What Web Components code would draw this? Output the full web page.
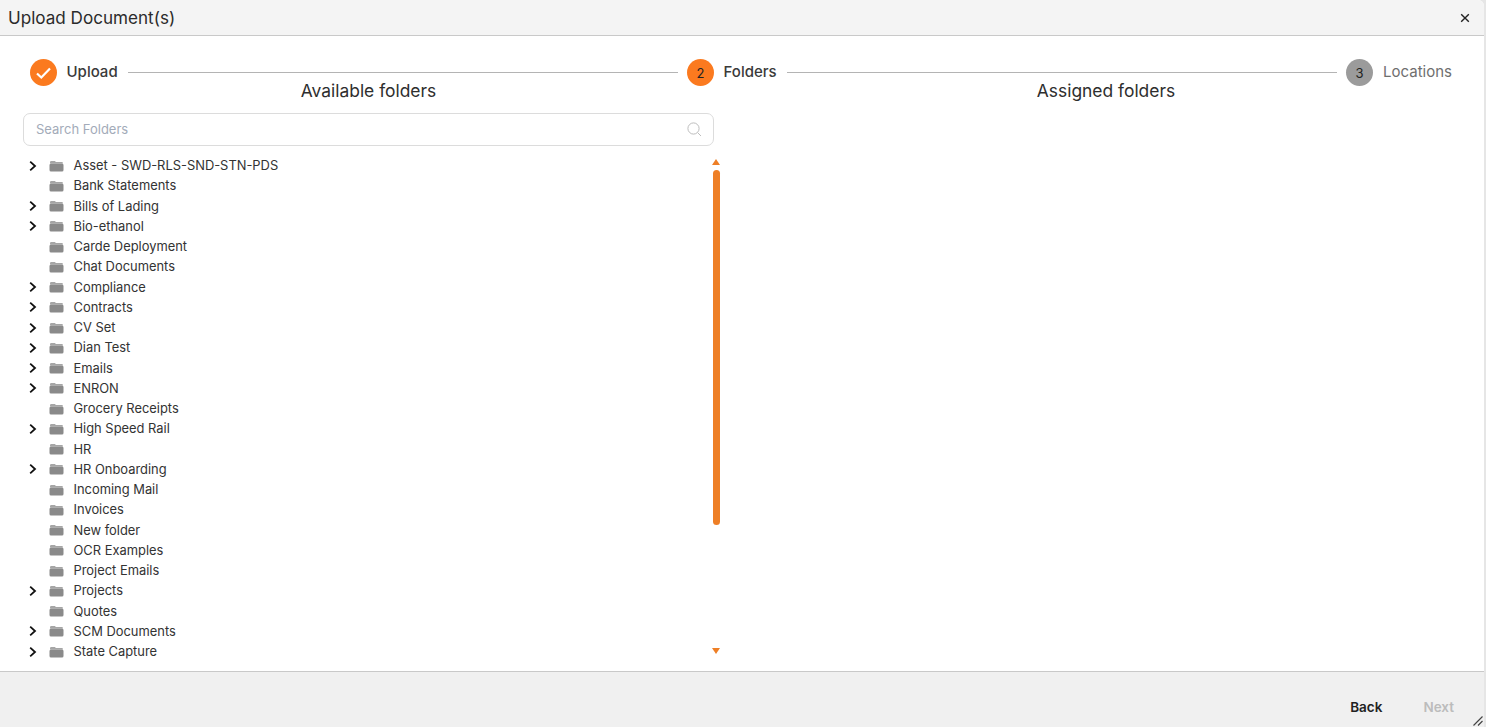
<!DOCTYPE html>
<html><head><meta charset="utf-8"><style>
html,body{margin:0;height:100%;overflow:hidden;background:#e6e6e6}
body{font-family:Inter,"Liberation Sans",sans-serif}
</style></head><body>
<upload-dialog></upload-dialog>
<script>
const chev='<svg width="10" height="12" viewBox="0 0 10 12"><path d="M2.200 1.700 7 6l-4.800 4.300" fill="none" stroke="#111" stroke-width="1.800"/></svg>';
const folder='<svg width="15" height="12" viewBox="0 0 15 12"><path d="M1 3.500V2.200a1.200 1.200 0 0 1 1.200-1.200h3.600l1.200 1h5.800a1.200 1.200 0 0 1 1.200 1.500z" fill="#a6a6a6"/><rect x="0.500" y="3.600" width="14" height="8" rx="1.500" fill="#8a8a8a"/></svg>';

class StepItem extends HTMLElement{
  connectedCallback(){
    const st=this.getAttribute('state');
    const num=this.getAttribute('num');
    const bg=st==='todo'?'#9b9b9b':'#fb7a1f';
    const inner=st==='done'
      ?'<svg width="17" height="14" viewBox="0 0 17 14"><path d="M2 7.500 6.300 11.500 15 2.500" fill="none" stroke="#fff" stroke-width="2.200"/></svg>'
      :`<span>${num}</span>`;
    const col=st==='todo'?'#6f6f6f':'#3a3a3a';
    this.attachShadow({mode:'open'}).innerHTML=`<style>
      :host{display:flex;align-items:center;gap:${st==='todo'?10:9.500}px}
      .c{width:27px;height:27px;border-radius:50%;background:${bg};display:flex;align-items:center;justify-content:center;font-size:13px;color:#222;flex:none}
      .l{font-size:15px;font-weight:${st==='todo'?400:500};color:${col};line-height:26px;height:27px;white-space:nowrap}
    </style><div class="c">${inner}</div><div class="l"><slot></slot></div>`;
  }
}
customElements.define('step-item',StepItem);

class StepLine extends HTMLElement{
  connectedCallback(){
    this.attachShadow({mode:'open'}).innerHTML=`<style>:host{display:block;flex:1;height:1px;background:#b4b4b4;margin:0 9px 0 10px}</style>`;
  }
}
customElements.define('step-line',StepLine);

class StepBar extends HTMLElement{
  connectedCallback(){
    this.attachShadow({mode:'open'}).innerHTML=`<style>:host{display:flex;align-items:center;height:27px;padding:23px 32px 0 30px}</style><slot></slot>`;
  }
}
customElements.define('step-bar',StepBar);

class SearchBox extends HTMLElement{
  connectedCallback(){
    this.attachShadow({mode:'open'}).innerHTML=`<style>
      :host{display:flex;align-items:center;justify-content:space-between;box-sizing:border-box;height:33px;border:1px solid #dcdcdc;border-radius:7px;padding:0 11px 0 12px;background:#fff}
      span{font-size:13px;color:#a3abb9;margin-bottom:1px}
      svg{display:block}
    </style><span><slot></slot></span><svg width="15" height="15" viewBox="0 0 15 15"><circle cx="6.500" cy="6.500" r="5.600" fill="none" stroke="#bdbdbd" stroke-width="1"/><path d="M10.700 10.700 14 14" stroke="#bdbdbd" stroke-width="1"/></svg>`;
  }
}
customElements.define('search-box',SearchBox);

class TreeRow extends HTMLElement{
  connectedCallback(){
    const kids=this.hasAttribute('kids');
    this.attachShadow({mode:'open'}).innerHTML=`<style>
      :host{display:flex;align-items:center;height:20.250px;flex:none;white-space:nowrap;font-size:12.900px;color:#333}
      .a{width:26px;flex:none;display:flex;justify-content:flex-start;padding-left:5px;box-sizing:border-box}
      .f{width:24.500px;flex:none;display:flex}
      svg{display:block}
    </style><div class="a">${kids?chev:''}</div><div class="f">${folder}</div><slot></slot>`;
  }
}
customElements.define('tree-row',TreeRow);

class FolderTree extends HTMLElement{
  connectedCallback(){
    const rows=[["Asset - SWD-RLS-SND-STN-PDS",1],["Bank Statements",0],["Bills of Lading",1],["Bio-ethanol",1],["Carde Deployment",0],["Chat Documents",0],["Compliance",1],["Contracts",1],["CV Set",1],["Dian Test",1],["Emails",1],["ENRON",1],["Grocery Receipts",0],["High Speed Rail",1],["HR",0],["HR Onboarding",1],["Incoming Mail",0],["Invoices",0],["New folder",0],["OCR Examples",0],["Project Emails",0],["Projects",1],["Quotes",0],["SCM Documents",1],["State Capture",1]];
    this.attachShadow({mode:'open'}).innerHTML=`<style>
      :host{display:flex;height:507px;margin-top:9px}
      .list{flex:1;overflow:hidden;display:flex;flex-direction:column;box-sizing:border-box;padding-top:.4px}
      .bar{width:10px;flex:none;margin-left:-1px;margin-right:-7px;display:flex;flex-direction:column;align-items:center}
      .t{width:0;height:0;border-left:4.500px solid transparent;border-right:4.500px solid transparent;border-bottom:6px solid #ee7f26;margin-top:4px}
      .th{width:7px;height:355px;background:#ee7f26;border-radius:3.500px;margin-top:5px}
      .d{width:0;height:0;border-left:4.500px solid transparent;border-right:4.500px solid transparent;border-top:6px solid #ee7f26;margin-top:123px}
    </style><div class="list">${rows.map(r=>`<tree-row ${r[1]?'kids':''}>${r[0]}</tree-row>`).join('')}</div><div class="bar"><div class="t"></div><div class="th"></div><div class="d"></div></div>`;
  }
}
customElements.define('folder-tree',FolderTree);

class FolderColumn extends HTMLElement{
  connectedCallback(){
    this.attachShadow({mode:'open'}).innerHTML=`<style>
      :host{display:flex;flex-direction:column;min-width:0}
      h2{margin:0;font-weight:400;font-size:17.400px;line-height:20px;color:#2e2e2e;text-align:center;height:32px}
    </style><h2>${this.getAttribute('heading')}</h2><slot></slot>`;
  }
}
customElements.define('folder-column',FolderColumn);

class UploadDialog extends HTMLElement{
  connectedCallback(){
    this.attachShadow({mode:'open'}).innerHTML=`<style>
      :host{display:flex;flex-direction:column;box-sizing:border-box;width:1484px;height:727px;background:#fff;border-top-right-radius:6px;overflow:hidden;position:relative}
      header{height:35px;flex:none;background:#f4f4f4;border-bottom:1px solid #c9c9c9;display:flex;align-items:center;justify-content:space-between;padding:0 14px 0 8px;font-size:17.100px;color:#2b2b2b;box-sizing:content-box}
      header svg{display:block}
      main{flex:1;min-height:0;display:flex;flex-direction:column}
      .cols{display:grid;grid-template-columns:691px 738px;column-gap:23px;padding:0 0 0 23px;margin-top:-5px}
      footer{height:56px;flex:none;background:#f0f0f0;border-top:1px solid #c9c9c9;display:flex;align-items:flex-end;justify-content:flex-end;gap:41px;padding:0 30px 12px 0;box-sizing:border-box;font-size:13.500px;font-weight:600}
      .back{color:#222}.next{color:#bcbcbc}
      .grip{position:absolute;right:1px;bottom:1px}
    </style>
    <header><span>Upload Document(s)</span><svg width="10" height="10" viewBox="0 0 10 10"><path d="M1.200 1.200 8.800 8.800M8.800 1.200 1.200 8.800" stroke="#222" stroke-width="1.400"/></svg></header>
    <main>
      <step-bar><step-item state="done">Upload</step-item><step-line></step-line><step-item state="active" num="2">Folders</step-item><step-line></step-line><step-item state="todo" num="3">Locations</step-item></step-bar>
      <div class="cols">
        <folder-column heading="Available folders"><search-box>Search Folders</search-box><folder-tree></folder-tree></folder-column>
        <folder-column heading="Assigned folders"></folder-column>
      </div>
    </main>
    <footer><span class="back">Back</span><span class="next">Next</span></footer>
    <svg class="grip" width="10" height="10" viewBox="0 0 10 10"><path d="M0.500 9.500 9.500 0.500M5 9.500 9.500 5" stroke="#444" stroke-width="1.200"/></svg>`;
  }
}
customElements.define('upload-dialog',UploadDialog);
</script>
</body></html>
